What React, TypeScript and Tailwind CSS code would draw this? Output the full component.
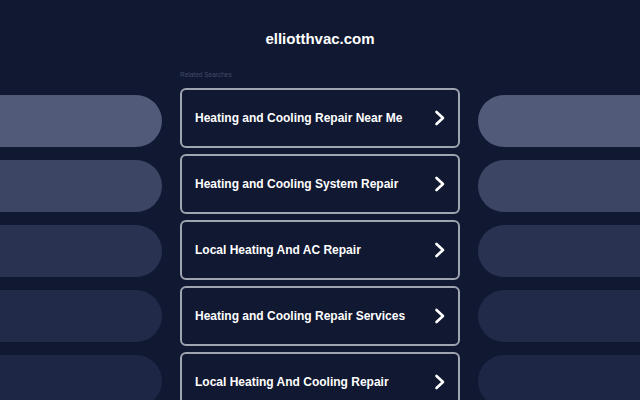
const SEARCHES = [
  "Heating and Cooling Repair Near Me",
  "Heating and Cooling System Repair",
  "Local Heating And AC Repair",
  "Heating and Cooling Repair Services",
  "Local Heating And Cooling Repair",
];

const PILLS = ["bg-[#515a79]", "bg-[#3d4565]", "bg-[#2a3252]", "bg-[#222a4a]", "bg-[#1e2646]"];

function Pills() {
  return (
    <div className="flex w-[280px] shrink-0 flex-col gap-[13px] pt-[25px]">
      {PILLS.map((c, i) => (
        <div key={i} className={`h-[52px] rounded-full ${c}`} />
      ))}
    </div>
  );
}

function Chevron() {
  return (
    <svg width="12" height="16" viewBox="0 0 12 16" fill="none">
      <path d="M2.5 2 L9 8 L2.5 14" stroke="white" strokeWidth="2.6" strokeLinecap="round" strokeLinejoin="round" />
    </svg>
  );
}

export default function App() {
  return (
    <div
      className="h-[400px] w-[640px] overflow-hidden bg-[#111831]"
      style={{ fontFamily: '"Liberation Sans", Arial, sans-serif' }}
    >
      <div className="pt-[30px] text-center text-[15px] font-bold leading-[17px] text-white">elliotthvac.com</div>
      <div className="flex justify-center gap-[18px] pt-[23px]">
        <Pills />
        <div className="flex w-[280px] shrink-0 flex-col">
          <div className="mb-[9px] h-[9px] text-[6.5px] leading-[9px] text-[#454b68]">Related Searches</div>
          <div className="flex flex-col gap-[6px]">
            {SEARCHES.map((s) => (
              <div
                key={s}
                className="flex h-[60px] items-center justify-between rounded-[6px] border-2 border-[#a0a4b0] pl-[13px] pr-[12px]"
              >
                <span className="text-[12px] font-bold text-white">{s}</span>
                <Chevron />
              </div>
            ))}
          </div>
        </div>
        <Pills />
      </div>
    </div>
  );
}
